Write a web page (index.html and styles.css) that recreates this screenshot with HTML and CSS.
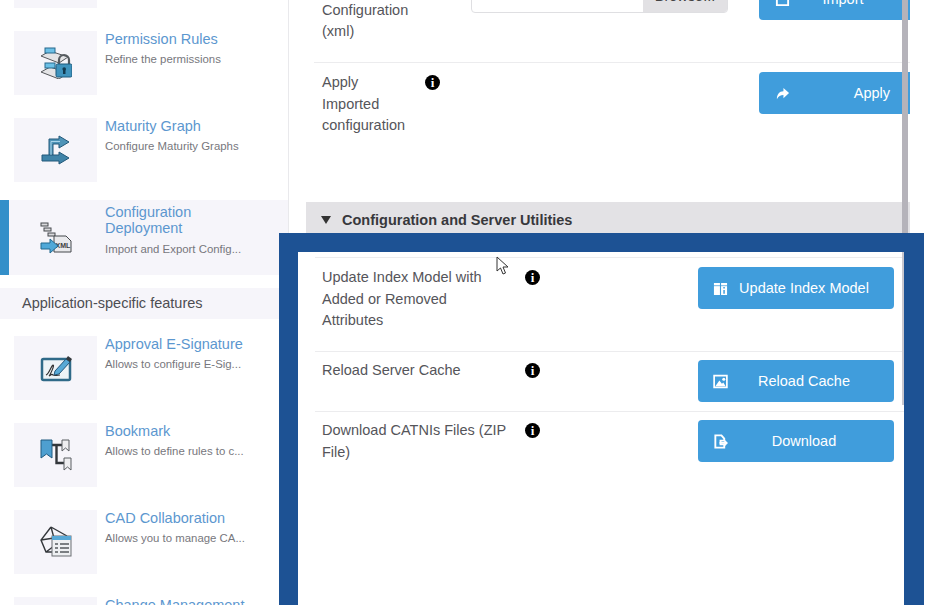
FILE: index.html
```html
<!DOCTYPE html>
<html lang="en">
<head>
<meta charset="utf-8">
<title>Configuration Deployment</title>
<link rel="stylesheet" href="styles.css">
</head>
<body>
<div class="page">
  <aside class="sidebar">
    <div class="item first">
      <div class="box"></div>
      <div class="text"></div>
    </div>
    <div class="item">
      <div class="box">
        <svg class="ico" viewBox="0 0 32 32"><path d="M1 9 L10 4 L28 10 L19 16 Z" fill="#e4e4e6" stroke="#55585c"/><path d="M1 25 L10 20 L28 26 L19 32 Z" fill="#e4e4e6" stroke="#55585c"/><rect x="5" y="1" width="10" height="5" fill="#6cc0e6" stroke="#27688c"/><rect x="5" y="16" width="10" height="5" fill="#6cc0e6" stroke="#27688c"/><path d="M19 18 V13 a5 5 0 0 1 10 0 V18" fill="none" stroke="#555a5e" stroke-width="2.2"/><rect x="16" y="17" width="16" height="13" rx="1.5" fill="#3f93bd" stroke="#1f5b7c"/><rect x="23" y="22" width="2.5" height="5" fill="#123a50"/><circle cx="24.2" cy="22" r="1.8" fill="#123a50"/></svg>
      </div>
      <div class="text">
        <div class="title">Permission Rules</div>
        <div class="desc">Refine the permissions</div>
      </div>
    </div>
    <div class="item">
      <div class="box">
        <svg class="ico" viewBox="0 0 32 32"><path d="M9 21 V5 H19 V2 L29 8 L19 14 V10 H13 V21 Z" fill="#4f94b8" stroke="#23597a"/><path d="M2 21 H19 V18 L29 24 L19 30 V27 H2 Z" fill="#3f83a8" stroke="#23597a"/><path d="M11 21 V7.5 H20" fill="none" stroke="#a9d4ea" stroke-width="1"/></svg>
      </div>
      <div class="text">
        <div class="title">Maturity Graph</div>
        <div class="desc">Configure Maturity Graphs</div>
      </div>
    </div>
    <div class="item active">
      <div class="box">
        <svg class="ico" viewBox="0 0 32 32"><g fill="#d9d9dc" stroke="#45484c"><rect x="1" y="1" width="7" height="3"/><rect x="4" y="6" width="7" height="3"/><rect x="8" y="11" width="7" height="3"/></g><path d="M14 14 H26 L31 19 V30 H14 Z" fill="#e9e9ec" stroke="#45484c"/><text x="15.5" y="26" class="xml">XML</text><path d="M1 21 H10 V17 L18 24 L10 31 V27 H1 Z" fill="#4fa8d8" stroke="#23688f"/></svg>
      </div>
      <div class="text">
        <div class="title">Configuration Deployment</div>
        <div class="desc">Import and Export Config...</div>
      </div>
    </div>
    <div class="heading">Application-specific features</div>
    <div class="item">
      <div class="box">
        <svg class="ico" viewBox="0 0 32 32"><rect x="2" y="7" width="28" height="21" rx="1.5" fill="#edf3f6" stroke="#2f6a88" stroke-width="2.5"/><path d="M6 23 C9 22 11 14 13 13 C15 13 10 23 9 24 C12 22 12 22 13 23 C15 24 16 23 20 23" fill="none" stroke="#333" stroke-width="1.2"/><path d="M15 19 L26 7 L30 10 L19 22 L14 23 Z" fill="#57a9d6" stroke="#23577a"/><path d="M26 7 L28 4 L32 7 L30 10 Z" fill="#33383c"/></svg>
      </div>
      <div class="text">
        <div class="title">Approval E-Signature</div>
        <div class="desc">Allows to configure E-Sig...</div>
      </div>
    </div>
    <div class="item">
      <div class="box">
        <svg class="ico" viewBox="0 0 32 32"><path d="M12 6 H23 M16.5 6 V24 H25" fill="none" stroke="#33373b" stroke-width="2.4"/><path d="M1 1 H12 V19 L6.5 15 L1 19 Z" fill="#4e9fd0" stroke="#215a80"/><path d="M22 1 H29 V12 L25.5 9 L22 12 Z" fill="#eeeef0" stroke="#5a5e62"/><path d="M24 19 H31 V31 L27.5 28 L24 31 Z" fill="#eeeef0" stroke="#5a5e62"/></svg>
      </div>
      <div class="text">
        <div class="title">Bookmark</div>
        <div class="desc">Allows to define rules to c...</div>
      </div>
    </div>
    <div class="item">
      <div class="box">
        <svg class="ico" viewBox="0 0 32 32"><path d="M11 1 L1 14 L6 26 H16 M11 1 L27 10 M1 14 L14 12 M11 1 L14 12 L14 20 M6 26 L14 20" fill="none" stroke="#33373b" stroke-width="1.4"/><rect x="12" y="10" width="19" height="20" fill="#eef0f2" stroke="#6b6f73"/><rect x="12" y="10" width="19" height="4" fill="#58a8d6"/><path d="M15 18 H18 M20 18 H29 M15 22 H18 M20 22 H29 M15 26 H18 M20 26 H29" stroke="#55595d" stroke-width="1.3"/></svg>
      </div>
      <div class="text">
        <div class="title">CAD Collaboration</div>
        <div class="desc">Allows you to manage CA...</div>
      </div>
    </div>
    <div class="item">
      <div class="box"></div>
      <div class="text">
        <div class="title">Change Management</div>
      </div>
    </div>
  </aside>

  <main class="main">
    <div class="row row-import">
      <div class="label">Import Configuration (xml)</div>
      <div class="file"><span class="file-input"></span><span class="file-browse">Browse...</span></div>
      <div class="btn btn-wide">
        <svg class="bi" viewBox="0 0 16 16"><path d="M2 3 H14 V14 H2 Z" fill="none" stroke="#fff" stroke-width="2"/></svg>
        <span class="btn-label">Import</span>
      </div>
    </div>
    <div class="row row-apply">
      <div class="label">Apply Imported configuration</div>
      <span class="info">i</span>
      <div class="btn btn-wide btn-end">
        <svg class="bi" viewBox="0 0 16 16"><path d="M9 2 L15 7.5 L9 13 V9.5 C6 9.5 3.5 10.5 2 14 C2 9 4.5 5.5 9 5.5 Z" fill="#fff"/></svg>
        <span class="btn-label">Apply</span>
      </div>
    </div>
    <div class="section-head"><span class="tri"></span>Configuration and Server Utilities</div>
    <div class="scrollbar"></div>
  </main>

  <section class="panel">
    <div class="panel-inner">
      <div class="prow prow-tall">
        <div class="plabel">Update Index Model with Added or Removed Attributes</div>
        <span class="info">i</span>
        <div class="btn btn-p">
          <svg class="bi" viewBox="0 0 16 16"><path d="M1 2 H7.4 V15 H1 Z M8.6 2 H15 V15 H8.6 Z" fill="#fff"/><path d="M0.5 5 H15.5" stroke="#409ddc" stroke-width="0.8"/><path d="M11.8 6.5 V8 M11.8 9.5 V13.5" stroke="#409ddc" stroke-width="1.6"/></svg>
          <span class="btn-label btn-tight">Update Index Model</span>
        </div>
      </div>
      <div class="prow prow-short">
        <div class="plabel">Reload Server Cache</div>
        <span class="info">i</span>
        <div class="btn btn-p">
          <svg class="bi" viewBox="0 0 16 16"><path d="M1.2 1.8 H14.8 V14.2 H1.2 Z" fill="#409ddc" stroke="#fff" stroke-width="1.8"/><path d="M2.5 13 L6.8 7 L9.5 10.5 L11 9 L13.5 13 Z" fill="#fff"/><circle cx="11.5" cy="5.5" r="1.6" fill="#fff"/></svg>
          <span class="btn-label">Reload Cache</span>
        </div>
      </div>
      <div class="prow prow-short">
        <div class="plabel">Download CATNIs Files (ZIP File)</div>
        <span class="info">i</span>
        <div class="btn btn-p">
          <svg class="bi" viewBox="0 0 16 16"><path d="M2.5 1.5 H9 L12 5 V7 H8 V11 H12 V14.5 H2.5 Z" fill="#409ddc" stroke="#fff" stroke-width="2"/><path d="M7 8.5 H12 V5.5 L16 9.5 L12 13.5 V10.5 H7 Z" fill="#fff"/></svg>
          <span class="btn-label">Download</span>
        </div>
      </div>
    </div>
    <div class="panel-scroll"></div>
  </section>

  <svg class="cursor" viewBox="0 0 14 20"><path d="M1 1 V15 L4.5 12 L7 18 L9.5 17 L7 11 H12 Z" fill="#fff" stroke="#333" stroke-width="1"/></svg>
</div>
</body>
</html>
```
FILE: styles.css
```css
html, body {
  margin: 0;
  height: 100%;
  overflow: hidden;
  background: #fff;
}
body {
  font-family: "Liberation Sans", Arial, sans-serif;
  color: #55555a;
}
.page {
  position: relative;
  display: flex;
  width: 934px;
  height: 605px;
  overflow: hidden;
}
.sidebar {
  flex: 0 0 288px;
  height: 800px;
  border-right: 1px solid #e9e9ec;
  margin-top: -56px;
}
.item {
  display: flex;
  gap: 8px;
  height: 64px;
  margin-bottom: 23px;
  padding-left: 14px;
}
.box {
  flex: 0 0 83px;
  height: 64px;
  background: #f6f5fa;
  display: flex;
  align-items: center;
  justify-content: center;
}
.ico {
  width: 32px;
  height: 32px;
}
.xml {
  font-family: "Liberation Sans", sans-serif;
  font-size: 7px;
  font-weight: 700;
  fill: #3a3d40;
}
.text {
  width: 148px;
}
.title {
  font-size: 14.5px;
  line-height: 16px;
  color: #5c97cf;
}
.desc {
  font-size: 11.4px;
  line-height: 16px;
  margin-top: 4px;
  color: #77777d;
  white-space: nowrap;
}
.item.active {
  height: 75px;
  margin-top: -5px;
  margin-bottom: 13px;
  padding-left: 5px;
  border-left: 9px solid #338fc9;
  background: #f6f5fa;
  align-items: center;
}
.item.active .text {
  align-self: flex-start;
  padding-top: 4px;
}
.item.active .desc {
  margin-top: 5px;
}
.heading {
  height: 31px;
  line-height: 31px;
  padding-left: 22px;
  margin-bottom: 17px;
  background: #f6f5fa;
  font-size: 14.5px;
  color: #4d4d52;
}
.main {
  position: relative;
  flex: 0 0 604px;
  height: 300px;
  margin-left: 17px;
}
.row {
  position: relative;
  display: flex;
  align-items: flex-start;
  margin-left: 8px;
  padding-left: 8px;
  border-bottom: 1px solid #ececee;
}
.row-import {
  height: 84px;
  margin-top: -22px;
}
.row-apply {
  height: 130px;
  border-bottom: 0;
  padding-top: 9px;
}
.label {
  font-size: 14.5px;
  line-height: 21.5px;
  box-sizing: border-box;
}
.row-import .label {
  flex: 0 0 149px;
  padding-right: 60px;
}
.row-apply .label {
  flex: 0 0 103px;
  padding-right: 8px;
}
.file {
  display: flex;
  width: 257px;
  height: 33px;
  margin-top: 2px;
  box-sizing: border-box;
  border: 1px solid #dfdfe2;
  border-radius: 4px;
  overflow: hidden;
  font-size: 14.5px;
  line-height: 31px;
}
.file-input {
  flex: 0 0 171px;
}
.file-browse {
  flex: 1;
  background: #e2e1e4;
  text-align: center;
  color: #444;
}
.btn {
  display: flex;
  align-items: center;
  box-sizing: border-box;
  height: 42px;
  background: #409ddc;
  color: #fff;
  font-size: 14.5px;
  padding-left: 15px;
  border-radius: 4px;
  margin-left: auto;
}
.btn-wide {
  width: 151px;
  padding-left: 16px;
  border-radius: 4px 0 0 4px;
}
.bi {
  flex: 0 0 15px;
  width: 15px;
  height: 15px;
}
.btn-label {
  flex: 1;
  text-align: center;
  padding-right: 14px;
}
.btn-end .btn-label {
  text-align: right;
  padding-right: 20px;
}
.btn-p {
  width: 196px;
}
.btn-tight {
  white-space: nowrap;
}
.info {
  flex: 0 0 15px;
  width: 15px;
  height: 15px;
  margin-top: 3px;
  border-radius: 50%;
  background: #000;
  color: #fff;
  font-family: "Liberation Serif", serif;
  font-size: 13px;
  font-weight: 700;
  line-height: 15px;
  text-align: center;
}
.section-head {
  height: 36px;
  line-height: 36px;
  background: #e3e2e5;
  color: #38383c;
  font-size: 14.5px;
  font-weight: 700;
  display: flex;
  align-items: center;
}
.tri {
  width: 0;
  height: 0;
  margin: 0 11px 0 15px;
  border-left: 5px solid transparent;
  border-right: 5px solid transparent;
  border-top: 8px solid #333;
}
.scrollbar {
  position: absolute;
  left: 596px;
  top: 0;
  width: 6px;
  height: 233px;
  background: #b5b3ba;
}
.panel {
  position: absolute;
  left: 279px;
  top: 233px;
  width: 645px;
  height: 372px;
  box-sizing: border-box;
  border-style: solid;
  border-color: #1d5294;
  border-width: 19px 20px 0 19px;
  background: #fff;
}
.panel-inner {
  padding: 5px 0 0 17px;
}
.panel-scroll {
  position: absolute;
  right: 0;
  top: 0;
  width: 2px;
  height: 153px;
  background: #c9c8cf;
}
.prow {
  display: flex;
  align-items: flex-start;
  box-sizing: border-box;
  padding: 8px 10px 0 7px;
  border-top: 1px solid #ececee;
}
.prow-tall {
  height: 94px;
  padding-top: 9px;
}
.prow-short {
  height: 60px;
}
.plabel {
  flex: 0 0 186px;
  font-size: 14.5px;
  line-height: 21.5px;
  margin-right: 17px;
}
.cursor {
  position: absolute;
  left: 496px;
  top: 256px;
  width: 14px;
  height: 20px;
}
```
